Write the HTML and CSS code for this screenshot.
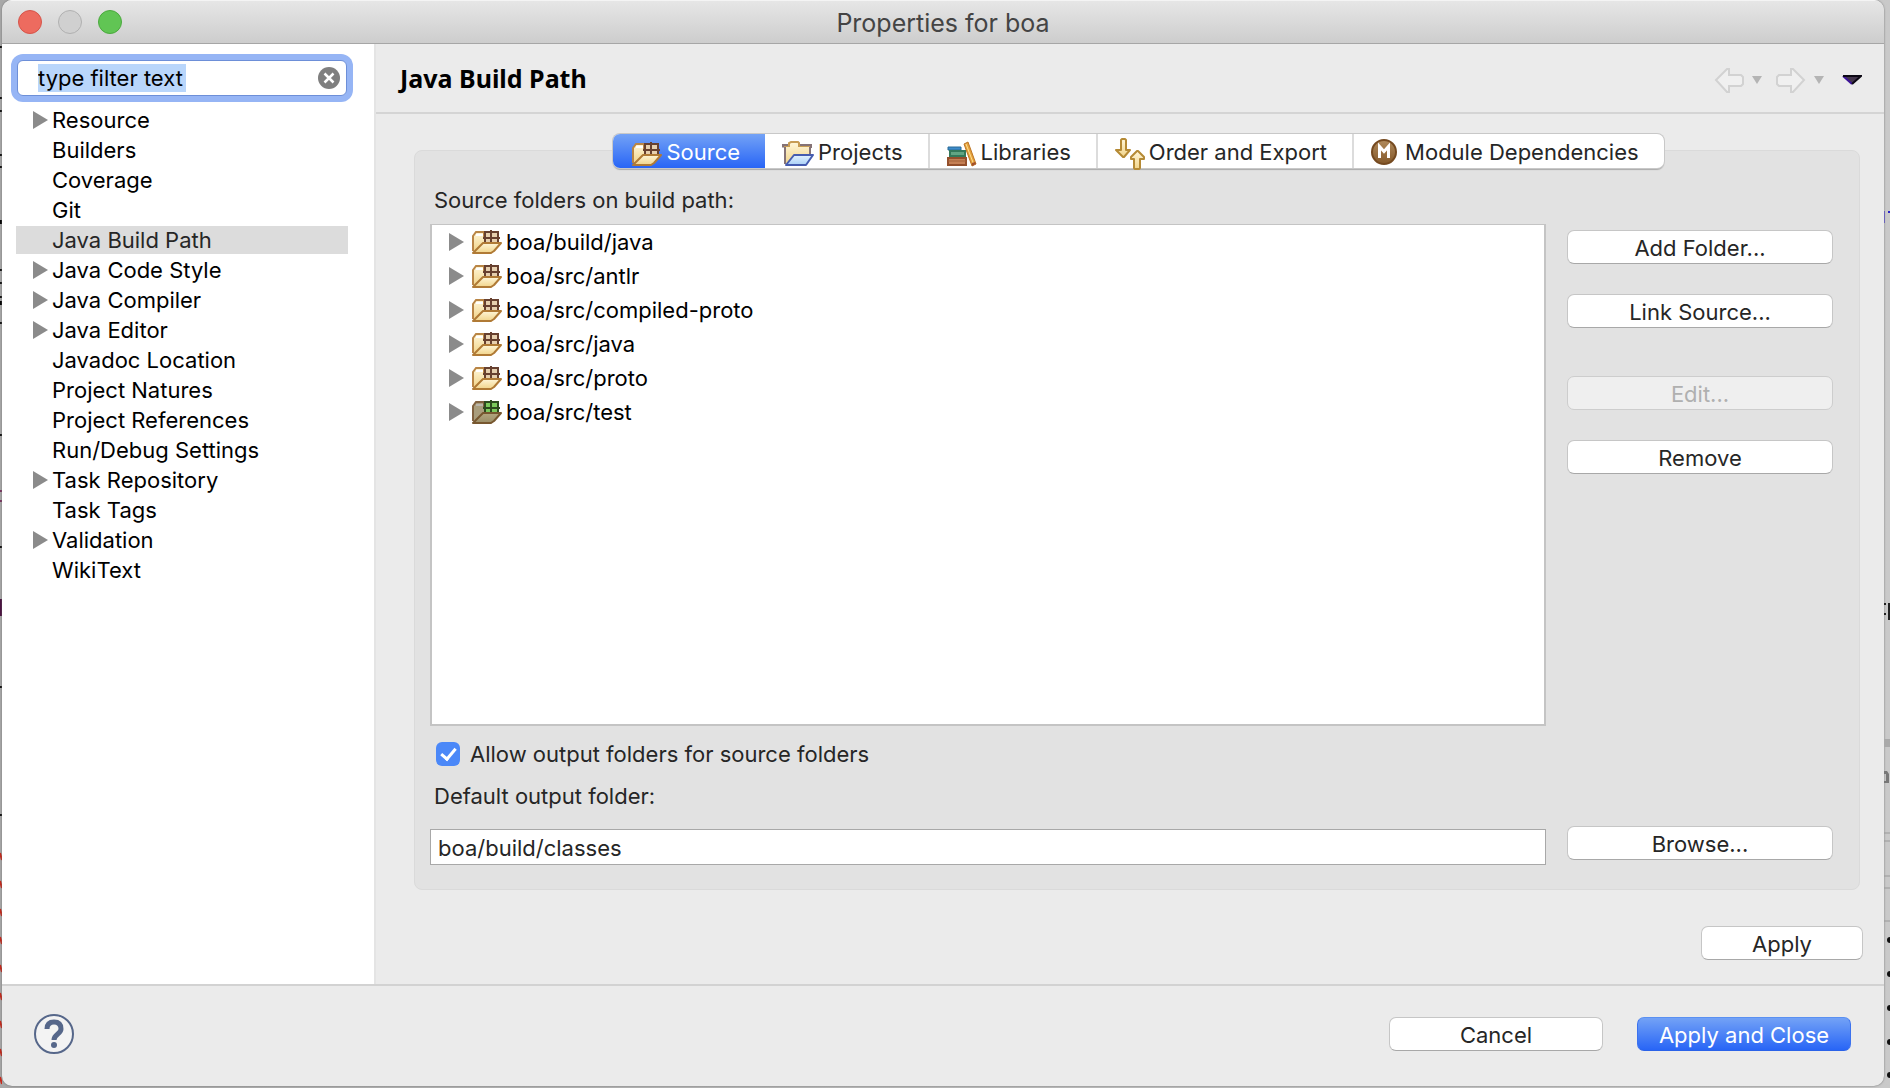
FILE: index.html
```html
<!DOCTYPE html>
<html lang="en">
<head>
<meta charset="utf-8">
<title>Properties for boa</title>
<link rel="stylesheet" href="styles.css">
</head>
<body>
<svg class="defs" width="0" height="0" aria-hidden="true">
  <defs>
    <linearGradient id="paper" x1="0" y1="0" x2="0" y2="1"><stop offset="0" stop-color="#fff6d8"/><stop offset="1" stop-color="#f1d48a"/></linearGradient>
    <linearGradient id="sky" x1="0" y1="0" x2="0" y2="1"><stop offset="0" stop-color="#e4f3ff"/><stop offset="1" stop-color="#a9d0f6"/></linearGradient>
    <linearGradient id="olive" x1="0" y1="0" x2="0" y2="1"><stop offset="0" stop-color="#b3a67f"/><stop offset="1" stop-color="#9a8d66"/></linearGradient>
    <linearGradient id="bronze" x1="0" y1="0" x2="0" y2="1"><stop offset="0" stop-color="#b08a5c"/><stop offset="1" stop-color="#85592a"/></linearGradient>
    <symbol id="pkg" viewBox="0 0 30 24">
      <path d="M1 21V6l3-4h8v4h13v8" fill="url(#paper)" stroke="#b98545" stroke-width="2"/>
      <path d="M4 5h7" stroke="#fff" stroke-width="2"/>
      <path d="M13 3h13v11H13z" fill="#e6cfae"/>
      <path d="M13 2h13v11H13zM19 0v13M11 8h17" fill="none" stroke="#67402f" stroke-width="2"/>
      <path d="M1 23 11 13h18l-7 8-3 2z" fill="url(#paper)" stroke="#b07a35" stroke-width="2" stroke-linejoin="round"/>
    </symbol>
    <symbol id="pkgtest" viewBox="0 0 30 24">
      <path d="M1 21V6l3-4h8v4h13v8" fill="#a99d7c" stroke="#80613f" stroke-width="2"/>
      <path d="M4 5h7" stroke="#b9b5ab" stroke-width="2"/>
      <path d="M13 3h13v11H13z" fill="#7cc95c"/>
      <path d="M13 2h13v11H13zM19 0v13M11 8h17" fill="none" stroke="#2d4a1e" stroke-width="2"/>
      <path d="M1 23 11 13h18l-7 8-3 2z" fill="url(#olive)" stroke="#77572f" stroke-width="2" stroke-linejoin="round"/>
    </symbol>
    <symbol id="tri" viewBox="0 0 15 18"><path d="M0 0v18l15-9z" fill="#8b8b8b"/></symbol>
  </defs>
</svg>

<div class="desktop">
  <svg class="edge" width="2" height="1088" viewBox="0 0 2 1088" aria-hidden="true">
    <path d="M0 47h2M0 98h2M0 111h2M0 155h2M0 167h2M0 270h2M0 283h2M0 297h2M0 323h2M0 435h2M0 547h2M0 687h2M0 815h2" stroke="#111" stroke-width="2"/>
    <path d="M0 222h2M0 303h2" stroke="#000" stroke-width="4"/>
    <path d="M0 599h2v17H0z" fill="#4a1040"/>
    <path d="M0 491h2M0 501h2" stroke="#7a3560" stroke-width="2"/>
    <path d="M0 853l2 7M0 881l2 7M0 909l2 7M0 937l2 7M0 965l2 7M0 993l2 7M0 1021l2 7M0 1049l2 7M0 1077l2 7" stroke="#c8281a" stroke-width="2"/>
  </svg>

  <main class="window">
    <header class="titlebar">
      <div class="lights">
        <button class="light close" aria-label="Close"></button>
        <button class="light minimize" aria-label="Minimize" disabled></button>
        <button class="light maximize" aria-label="Zoom"></button>
      </div>
      <h1>Properties for boa</h1>
    </header>

    <div class="content">
      <nav class="sidebar" aria-label="Property pages">
        <div class="search">
          <input type="text" value="type filter text" size="13" aria-label="Filter">
          <button class="clear" aria-label="Clear">
            <svg width="22" height="22" viewBox="0 0 22 22"><circle cx="11" cy="11" r="11" fill="#7f7f7f"/><path d="M6.500 6.500l9 9M15.500 6.500l-9 9" stroke="#fff" stroke-width="2.500"/></svg>
          </button>
        </div>
        <ul class="pages">
          <li><svg class="tri"><use href="#tri"/></svg><a href="#">Resource</a></li>
          <li><a href="#">Builders</a></li>
          <li><a href="#">Coverage</a></li>
          <li><a href="#">Git</a></li>
          <li class="selected"><a href="#" aria-current="page">Java Build Path</a></li>
          <li><svg class="tri"><use href="#tri"/></svg><a href="#">Java Code Style</a></li>
          <li><svg class="tri"><use href="#tri"/></svg><a href="#">Java Compiler</a></li>
          <li><svg class="tri"><use href="#tri"/></svg><a href="#">Java Editor</a></li>
          <li><a href="#">Javadoc Location</a></li>
          <li><a href="#">Project Natures</a></li>
          <li><a href="#">Project References</a></li>
          <li><a href="#">Run/Debug Settings</a></li>
          <li><svg class="tri"><use href="#tri"/></svg><a href="#">Task Repository</a></li>
          <li><a href="#">Task Tags</a></li>
          <li><svg class="tri"><use href="#tri"/></svg><a href="#">Validation</a></li>
          <li><a href="#">WikiText</a></li>
        </ul>
      </nav>

      <section class="page">
        <div class="page-head">
          <h2>Java Build Path</h2>
          <div class="history">
            <button aria-label="Back" disabled><svg width="30" height="26" viewBox="0 0 30 26"><path d="M2 13 13 2h2v6h12l2 2v7l-2 2H15v6h-2z" fill="#f0f0f0" stroke="#d2d2d2" stroke-width="2"/></svg></button>
            <button aria-label="Back history" disabled><svg width="10" height="8" viewBox="0 0 10 8"><path d="M0 0h10L5 8z" fill="#b4b4b4"/></svg></button>
            <button class="forward" aria-label="Forward" disabled><svg width="30" height="26" viewBox="0 0 30 26"><path d="M28 13 17 2h-2v6H3L1 10v7l2 2h12v6h2z" fill="#f0f0f0" stroke="#d2d2d2" stroke-width="2"/></svg></button>
            <button aria-label="Forward history" disabled><svg width="10" height="8" viewBox="0 0 10 8"><path d="M0 0h10L5 8z" fill="#b4b4b4"/></svg></button>
            <button class="menu" aria-label="Menu"><svg width="20" height="10" viewBox="0 0 20 10"><path d="M2 1h16l-8 8z" fill="#43364c"/><path d="M1 1l9 8" stroke="#3c1299" stroke-width="2"/><path d="M1 1h18l-9 8" fill="none" stroke="#0c0814" stroke-width="2"/></svg></button>
          </div>
        </div>

        <div class="page-body">
          <div class="tabs" role="tablist">
            <button role="tab" aria-selected="true"><svg width="30" height="24"><use href="#pkg"/></svg>Source</button>
            <button role="tab" aria-selected="false"><svg width="32" height="26" viewBox="0 0 32 26">
              <path d="M0 5h30" stroke="#857376" stroke-width="3"/>
              <path d="M3 23V5h4V2l2-1h7l1 1v3h11v9" fill="url(#paper)" stroke="#c79c54" stroke-width="2"/>
              <path d="M3 23V6M28 14V6M0 6V4h6M29 7V4H18" fill="none" stroke="#857376" stroke-width="2"/>
              <path d="M4 24 12 14h19l-7 10z" fill="url(#sky)" stroke="#465db0" stroke-width="2" stroke-linejoin="round"/></svg>Projects</button>
            <button role="tab" aria-selected="false"><svg width="30" height="26" viewBox="0 0 30 26">
              <path d="M1 6h13v3H1z" fill="#3d8bcb" stroke="#286a96" stroke-width="1"/>
              <path d="M3 10h15v5H3z" fill="#62a583" stroke="#34795a" stroke-width="2"/>
              <path d="M1 17h18v7H1z" fill="#c58055" stroke="#944f2b" stroke-width="2"/>
              <path d="M1 20h18" stroke="#a3623b" stroke-width="1"/>
              <path d="M17 3l4-2 8 22-4 2z" fill="#e4a13b" stroke="#bd7524" stroke-width="1"/>
              <path d="M19 3l8 21" stroke="#ffe092" stroke-width="1"/><path d="M25 22l3-1 1 2-4 2z" fill="#a34f2b"/></svg>Libraries</button>
            <button role="tab" aria-selected="false"><svg width="30" height="32" viewBox="0 0 30 32" fill="url(#paper)" stroke="#b58a35" stroke-width="2" stroke-linejoin="round">
              <path d="M6 2l1-1h3l1 1v10h4l-6 7h-1l-7-7h5z"/><path d="M19 30l1 1h4l1-1V21h4v-2l-6-6h-1l-6 6v2h3z"/></svg>Order and Export</button>
            <button role="tab" aria-selected="false"><svg class="module" width="30" height="26" viewBox="0 0 30 26">
              <circle cx="13" cy="13" r="12" fill="url(#bronze)" stroke="#754a20" stroke-width="2"/>
              <path d="M8.500 19V7.500l4.500 5 4.500-5V19" fill="none" stroke="#fff" stroke-width="3"/></svg>Module Dependencies</button>
          </div>

          <div class="panel" role="tabpanel">
            <p class="label" id="folders-label">Source folders on build path:</p>
            <ul class="folders" aria-labelledby="folders-label">
              <li><svg class="tri"><use href="#tri"/></svg><svg class="pkg"><use href="#pkg"/></svg>boa/build/java</li>
              <li><svg class="tri"><use href="#tri"/></svg><svg class="pkg"><use href="#pkg"/></svg>boa/src/antlr</li>
              <li><svg class="tri"><use href="#tri"/></svg><svg class="pkg"><use href="#pkg"/></svg>boa/src/compiled-proto</li>
              <li><svg class="tri"><use href="#tri"/></svg><svg class="pkg"><use href="#pkg"/></svg>boa/src/java</li>
              <li><svg class="tri"><use href="#tri"/></svg><svg class="pkg"><use href="#pkg"/></svg>boa/src/proto</li>
              <li><svg class="tri"><use href="#tri"/></svg><svg class="pkg"><use href="#pkgtest"/></svg>boa/src/test</li>
            </ul>
            <div class="actions">
              <button class="push">Add Folder...</button>
              <button class="push">Link Source...</button>
              <button class="push group" disabled>Edit...</button>
              <button class="push">Remove</button>
            </div>
            <label class="check">
              <input type="checkbox" checked>
              Allow output folders for source folders
            </label>
            <label class="label" for="output">Default output folder:</label>
            <input class="field" id="output" type="text" value="boa/build/classes">
            <button class="push browse">Browse...</button>
          </div>

          <div class="apply-row"><button class="push apply">Apply</button></div>
        </div>
      </section>
    </div>

    <footer class="footer">
      <button class="help" aria-label="Help"><svg width="40" height="40" viewBox="0 0 40 40"><circle cx="20" cy="20" r="19" fill="#f3f3f3" stroke="#56678a" stroke-width="2"/><path d="M13 15c0-5 3-7 7-7s7 2 7 7c0 5-7 5-7 11" fill="none" stroke="#56678a" stroke-width="5"/><circle cx="20" cy="31" r="3" fill="#56678a"/></svg></button>
      <button class="push wide">Cancel</button>
      <button class="push wide primary">Apply and Close</button>
    </footer>
  </main>

  <svg class="edge" width="6" height="1088" viewBox="0 0 6 1088" aria-hidden="true">
    <path d="M0 739h6v8H0z" fill="#a9a9a9"/>
    <path d="M0 833h6M0 841h6M0 876h6M0 888h6M0 921h6" stroke="#999"/>
    <path d="M0 211h1v12H0z" fill="#6a62b8"/><path d="M4 211h2v2H4z" fill="#2a22c8"/>
    <path d="M4 603h2v17H4zM0 603h2v2H0zM0 613h2v2H0z" fill="#222"/>
    <path d="M0 771h3l2 3v9H0v-2h2v-7H0z" fill="#777"/>
    <g fill="#111"><circle cx="6" cy="940" r="3"/><circle cx="6" cy="974" r="3"/><circle cx="6" cy="1008" r="3"/><circle cx="6" cy="1042" r="3"/><circle cx="6" cy="1075" r="3"/></g>
  </svg>
</div>
</body>
</html>
```
FILE: styles.css
```css
* { box-sizing: border-box; }

body {
  margin: 0;
  background: #b4b4b4;
  color: #000;
  font: 22px/28px Inter, "Liberation Sans", sans-serif;
}

h1, h2, p, ul { margin: 0; padding: 0; }
ul { list-style: none; }
a { color: inherit; text-decoration: none; }
svg { display: block; flex: none; }
.defs { position: absolute; }

button, input { font: inherit; color: inherit; margin: 0; }
button { border: 0; padding: 0; background: none; }

.desktop {
  display: grid;
  grid-template-columns: 2px minmax(0, 1fr) 6px;
  min-height: 100vh;
  background: linear-gradient(90deg, #a8a8a8, #c9c9c9);
}

.window {
  display: flex;
  flex-direction: column;
  margin-bottom: 2px;
  border-radius: 10px;
  background: #ebebeb;
  box-shadow: 0 0 2px #666;
  overflow: hidden;
}

.titlebar {
  display: grid;
  grid-template-columns: 1fr auto 1fr;
  align-items: center;
  height: 44px;
  padding: 0 16px;
  border-top: 1px solid #f4f4f4;
  border-bottom: 1px solid #a6a6a6;
  background: linear-gradient(#e6e6e6, #cdcdcd);
}
.titlebar h1 { padding-top: 1px; font-size: 25px; font-weight: 400; color: #444; }
.lights { display: flex; gap: 16px; }
.light { width: 24px; height: 24px; border: 1px solid; border-radius: 50%; }
.close { background: #ed6b5f; border-color: #d5544a; }
.minimize { background: #d0d0d0; border-color: #b0b0b0; }
.maximize { background: #61c554; border-color: #4ba93e; }

.content {
  display: grid;
  grid-template-columns: 374px minmax(0, 1fr);
  flex: 1;
}

.sidebar {
  padding: 16px 26px 0 14px;
  border-right: 2px solid #e4e4e4;
  background: #fff;
}
.search {
  display: flex;
  align-items: center;
  justify-content: space-between;
  height: 36px;
  margin: 0 1px;
  padding: 0 6px 0 20px;
  border: 1px solid #6d8fd8;
  border-radius: 6px;
  background: #fff;
  box-shadow: 0 0 0 6px #96b5f5;
}
.search input {
  width: 148px;
  height: 28px;
  border: 0;
  padding: 0;
  outline: 0;
  background: #b9d6fb;
}
.pages { padding-top: 10px; }
.pages li {
  display: grid;
  grid-template-columns: 19px 1fr;
  align-items: center;
  height: 28px;
  margin-bottom: 2px;
  padding-left: 17px;
}
.pages a { grid-column: 2; }
.pages .selected { background: #dcdcdc; color: #262626; }
.tri { width: 15px; height: 18px; }

.page { display: flex; flex-direction: column; }
.page-head {
  display: flex;
  align-items: center;
  justify-content: space-between;
  height: 70px;
  padding: 0 22px 0 24px;
  border-bottom: 2px solid #d4d4d4;
}
.page-head h2 { font: bold 25px/34px "Noto Sans", sans-serif; }
.history { display: flex; align-items: center; gap: 8px; padding-top: 4px; }
.forward { margin-left: 6px; }
.menu { margin-left: 10px; }

.page-body {
  display: flex;
  flex-direction: column;
  flex: 1;
  padding: 20px 21px 24px 38px;
}
.tabs {
  position: relative;
  display: flex;
  align-self: center;
  height: 34px;
  margin-bottom: -18px;
  border-radius: 7px;
  background: #fff;
  color: #262626;
  box-shadow: 0 0 0 1px #c8c8c8, 0 2px 1px #aaa;
}
.tabs button {
  display: flex;
  align-items: center;
  gap: 4px;
  padding: 2px 25px 0 17px;
  border-right: 2px solid #dcdcdc;
}
.tabs button:last-child { border-right: 0; }
.tabs svg { margin-top: 3px; }
.tabs .module { margin-top: 0; }
.tabs [aria-selected="true"] {
  padding-left: 19px;
  border: 0;
  border-radius: 7px 0 0 7px;
  background: linear-gradient(#73a2f6, #2865f6);
  color: #fff;
}

.panel {
  display: grid;
  grid-template-columns: minmax(0, 1fr) 266px;
  grid-template-rows: auto minmax(0, 1fr) auto auto auto;
  column-gap: 21px;
  flex: 1;
  margin-right: 3px;
  padding: 35px 26px 24px 15px;
  border: 1px solid #dadada;
  border-radius: 8px;
  background: #e2e2e2;
  color: #262626;
}
.label { grid-column: 1; padding-left: 4px; }
.folders {
  grid-column: 1;
  margin-top: 10px;
  border: 2px solid #c4c4c4;
  border-top-width: 1px;
  background: #fff;
  color: #000;
}
.folders li { display: flex; align-items: center; height: 34px; padding-left: 17px; }
.pkg { width: 30px; height: 24px; margin: 0 4px 0 8px; }
.actions {
  display: flex;
  flex-direction: column;
  gap: 30px;
  padding-top: 16px;
}
.push {
  height: 34px;
  padding-top: 1px;
  border: 1px solid #c6c6c6;
  border-bottom-color: #a8a8a8;
  border-radius: 7px;
  background: #fff;
  color: #262626;
  line-height: 28px;
}
.push:disabled { border-color: #cdcdcd; background: #efefef; color: #b0b0b0; }
.group { margin-top: 18px; }

.check {
  display: flex;
  align-items: center;
  grid-column: 1;
  gap: 10px;
  height: 24px;
  margin: 16px 0;
  padding-left: 6px;
}
.check input {
  appearance: none;
  display: grid;
  place-items: center;
  width: 24px;
  height: 24px;
  border-radius: 6px;
  background: #4b88f8;
}
.check input:checked::before {
  content: "";
  width: 6px;
  height: 12px;
  margin-bottom: 4px;
  border: solid #fff;
  border-width: 0 3px 3px 0;
  transform: rotate(40deg);
}
.field {
  grid-column: 1;
  width: 100%;
  height: 36px;
  margin-top: 19px;
  padding: 1px 7px 0;
  border: 1px solid #a8a8a8;
  background: #fff;
}
.browse { margin-top: 16px; }

.apply-row { display: flex; justify-content: flex-end; margin-top: 36px; }
.apply { width: 162px; }

.footer {
  display: flex;
  align-items: center;
  gap: 34px;
  height: 102px;
  padding: 0 33px 4px 32px;
  border-top: 2px solid #d2d2d2;
}
.help { margin-right: auto; }
.wide { width: 214px; }
.primary {
  border-color: #5a90f2 #3c72ee #2a62e8;
  background: linear-gradient(#73a2f6, #2865f6);
  color: #fff;
}
```
